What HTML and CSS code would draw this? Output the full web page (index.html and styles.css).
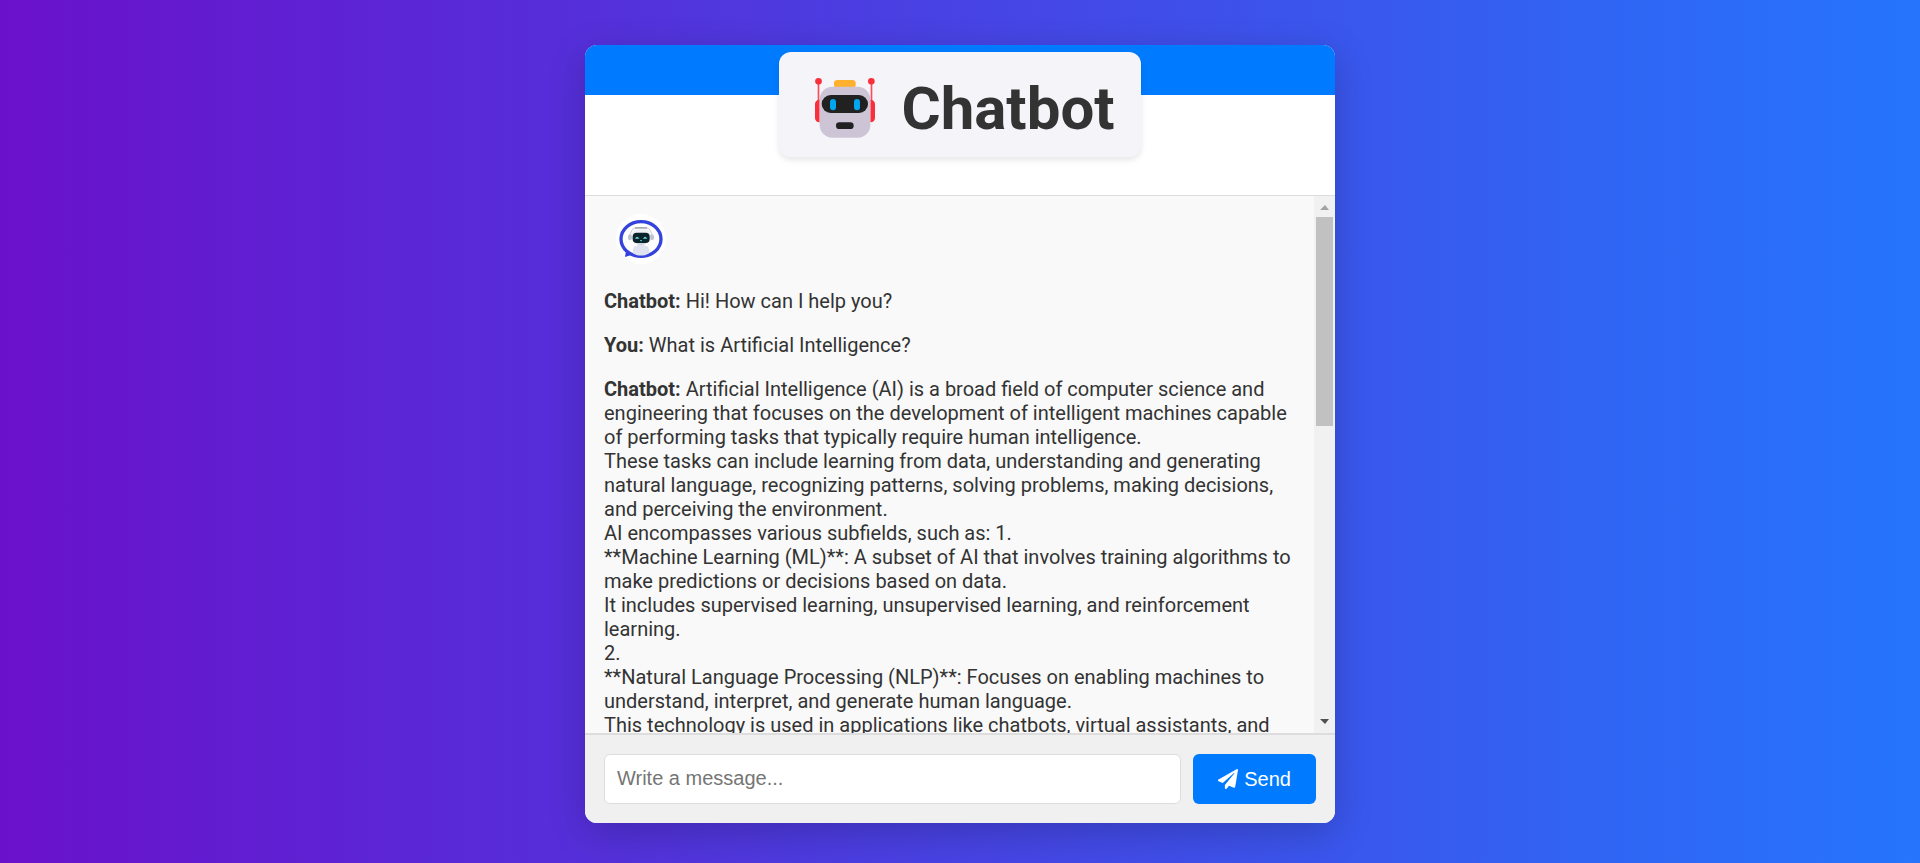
FILE: index.html
```html
<!DOCTYPE html>
<html lang="en">
<head>
<meta charset="utf-8">
<meta name="viewport" content="width=device-width, initial-scale=1">
<title>Chatbot</title>
<link rel="stylesheet" href="styles.css">
</head>
<body>
<main class="chat-card">
  <header class="chat-header">
    <h1 class="brand">
      <svg class="brand-icon" viewBox="48 42 180 180" aria-hidden="true">
        <g fill="#f92f3a">
          <path d="M56 48h5v60h-5zM215 48h5v60h-5z" fill="#fb4d56"/>
          <circle cx="58.500" cy="49" r="10"/>
          <circle cx="217" cy="49" r="10"/>
          <path d="M62 104v68c-8 0-14-5-14-13v-42c0-8 6-13 14-13zM214 104v68c8 0 14-5 14-13v-42c0-8-6-13-14-13z"/>
        </g>
        <rect x="105" y="45" width="65" height="24" rx="10" fill="#ffb02e"/>
        <rect x="62" y="65" width="152" height="153" rx="38" fill="#cdc4d6"/>
        <rect x="68" y="90" width="139" height="54" rx="27" fill="#212121"/>
        <rect x="93" y="102" width="18" height="34" rx="9" fill="#00a6ed"/>
        <rect x="165" y="102" width="18" height="34" rx="9" fill="#00a6ed"/>
        <rect x="111" y="172" width="53" height="20" rx="10" fill="#212121"/>
      </svg>
      <span>Chatbot</span>
    </h1>
  </header>

  <section class="conversation" aria-label="Conversation">
    <div class="messages">
      <svg class="avatar" viewBox="18 12 150 150" role="img" aria-label="Chatbot avatar">
        <circle cx="93" cy="87" r="75" fill="#fff"/>
        <path d="M49 117l-4 24 26-8z" fill="#3340dc"/>
        <ellipse cx="93" cy="87" rx="60" ry="52" fill="#fff" stroke="#3443dc" stroke-width="10"/>
        <path d="M69 120c0-10 8-15 24-15s24 5 24 15v10c-12 9-36 9-48 0z" fill="#dfe3ef"/>
        <path d="M78 99h30c0 8-30 8-30 0z" fill="#c9cddb"/>
        <rect x="64" y="58" width="58" height="42" rx="18" fill="#f0f1f5"/>
        <path d="M61 74c2-12 8-20 18-21h28c10 1 16 9 18 21" fill="none" stroke="#c5c8d0" stroke-width="3"/>
        <path d="M75 54h36" stroke="#82878f" stroke-width="3"/>
        <ellipse cx="60" cy="82" rx="6" ry="9" fill="#bfc4d2"/>
        <ellipse cx="126" cy="82" rx="6" ry="9" fill="#bfc4d2"/>
        <rect x="68" y="68" width="51" height="31" rx="12" fill="#0b2429"/>
        <path d="M75 86q6-11 13 0zM99 86q6-11 13 0z" fill="#5fd6dc"/>
        <path d="M90 92h6" stroke="#4fc9cf" stroke-width="3"/>
      </svg>
      <p class="message"><strong>Chatbot:</strong> Hi! How can I help you?</p>
      <p class="message"><strong>You:</strong> What is Artificial Intelligence?</p>
      <p class="message"><strong>Chatbot:</strong> Artificial Intelligence (AI) is a broad field of computer science and engineering that focuses on the development of intelligent machines capable of performing tasks that typically require human intelligence.<br>
        These tasks can include learning from data, understanding and generating natural language, recognizing patterns, solving problems, making decisions, and perceiving the environment.<br>
        AI encompasses various subfields, such as: 1.<br>
        **Machine Learning (ML)**: A subset of AI that involves training algorithms to make predictions or decisions based on data.<br>
        It includes supervised learning, unsupervised learning, and reinforcement learning.<br>
        2.<br>
        **Natural Language Processing (NLP)**: Focuses on enabling machines to understand, interpret, and generate human language.<br>
        This technology is used in applications like chatbots, virtual assistants, and</p>
    </div>
    <div class="scrollbar" aria-hidden="true">
      <svg class="scroll-arrow" viewBox="0 0 21 21"><path d="M6 14l5-5 4 5z" fill="#a3a3a3"/></svg>
      <div class="scroll-track"><div class="scroll-thumb"></div></div>
      <svg class="scroll-arrow" viewBox="0 0 21 21"><path d="M6 7h9l-4 5z" fill="#505050"/></svg>
    </div>
  </section>

  <form class="composer">
    <input class="composer-input" type="text" placeholder="Write a message..." aria-label="Write a message">
    <button class="send-button" type="button">
      <svg class="send-icon" viewBox="0 0 512 512" aria-hidden="true"><path fill="currentColor" d="M476 3.2L12.500 270.600c-18.100 10.400-15.800 35.600 2.200 43.200L121 358.400l287.300-253.200c5.500-4.900 13.300 2.600 8.600 8.300L176 407v80.500c0 23.600 28.500 32.900 42.500 15.800L282 426l124.600 52.200c14.200 6 30.400-2.900 33-18.200l72-432C515 7.800 493.300-6.800 476 3.200z"/></svg>
      <span>Send</span>
    </button>
  </form>
</main>
</body>
</html>
```
FILE: styles.css
```css
* {
  box-sizing: border-box;
}

body {
  margin: 0;
  height: 100vh;
  padding: 45px 0 40px;
  display: flex;
  justify-content: center;
  background: linear-gradient(to right, #6a11cb, #2575fc);
  color: #333;
  font-family: Roboto, sans-serif;
  font-size: 20px;
  line-height: 24px;
}

.chat-card {
  width: 100%;
  max-width: 750px;
  display: flex;
  flex-direction: column;
  overflow: hidden;
  background: #fff;
  border-radius: 12px;
  box-shadow: 0 10px 38px rgba(0, 0, 0, 0.2);
}

.chat-header {
  flex: none;
  height: 50px;
  margin-bottom: 100px;
  padding-top: 7px;
  display: flex;
  justify-content: center;
  align-items: flex-start;
  background: #007bff;
}

.brand {
  margin: 0;
  padding: 17px 26px 8px 36px;
  display: flex;
  align-items: center;
  gap: 26px;
  background: #f4f4f9;
  border-radius: 12px;
  box-shadow: 0 3px 6px rgba(0, 0, 0, 0.1);
  font-size: 60px;
  font-weight: 700;
  line-height: 80px;
}

.brand-icon {
  width: 60px;
  height: 60px;
  overflow: visible;
}

.conversation {
  flex: 1;
  min-height: 0;
  display: flex;
  background: #f9f9f9;
  border-top: 1px solid #ddd;
  border-bottom: 2px solid #ddd;
}

.messages {
  flex: 1;
  padding: 18px 19px 0;
  overflow: hidden;
}

.avatar {
  display: block;
  width: 50px;
  height: 50px;
  margin: 0 0 25px 12px;
}

.message {
  margin: 0 0 20px;
}

.scrollbar {
  flex: none;
  width: 21px;
  display: flex;
  flex-direction: column;
  background: #f1f1f1;
}

.scroll-arrow {
  flex: none;
  width: 21px;
  height: 21px;
}

.scroll-track {
  flex: 1;
  padding: 0 2px;
}

.scroll-thumb {
  height: 209px;
  background: #c1c1c1;
}

.composer {
  flex: none;
  display: flex;
  gap: 12px;
  padding: 19px;
  background: #f0f0f0;
}

.composer-input,
.send-button {
  height: 50px;
  border-radius: 6px;
  font-family: "Liberation Sans", Arial, sans-serif;
  font-size: 20px;
}

.composer-input {
  flex: 1;
  min-width: 0;
  padding: 0 12px 2px;
  border: 1px solid #ddd;
  background: #fff;
  color: #333;
}

.composer-input::placeholder {
  color: #757575;
}

.send-button {
  display: flex;
  align-items: center;
  gap: 6px;
  padding: 0 25px;
  border: 0;
  background: #007bff;
  color: #fff;
  cursor: pointer;
}

.send-icon {
  width: 20px;
  height: 20px;
}
```
